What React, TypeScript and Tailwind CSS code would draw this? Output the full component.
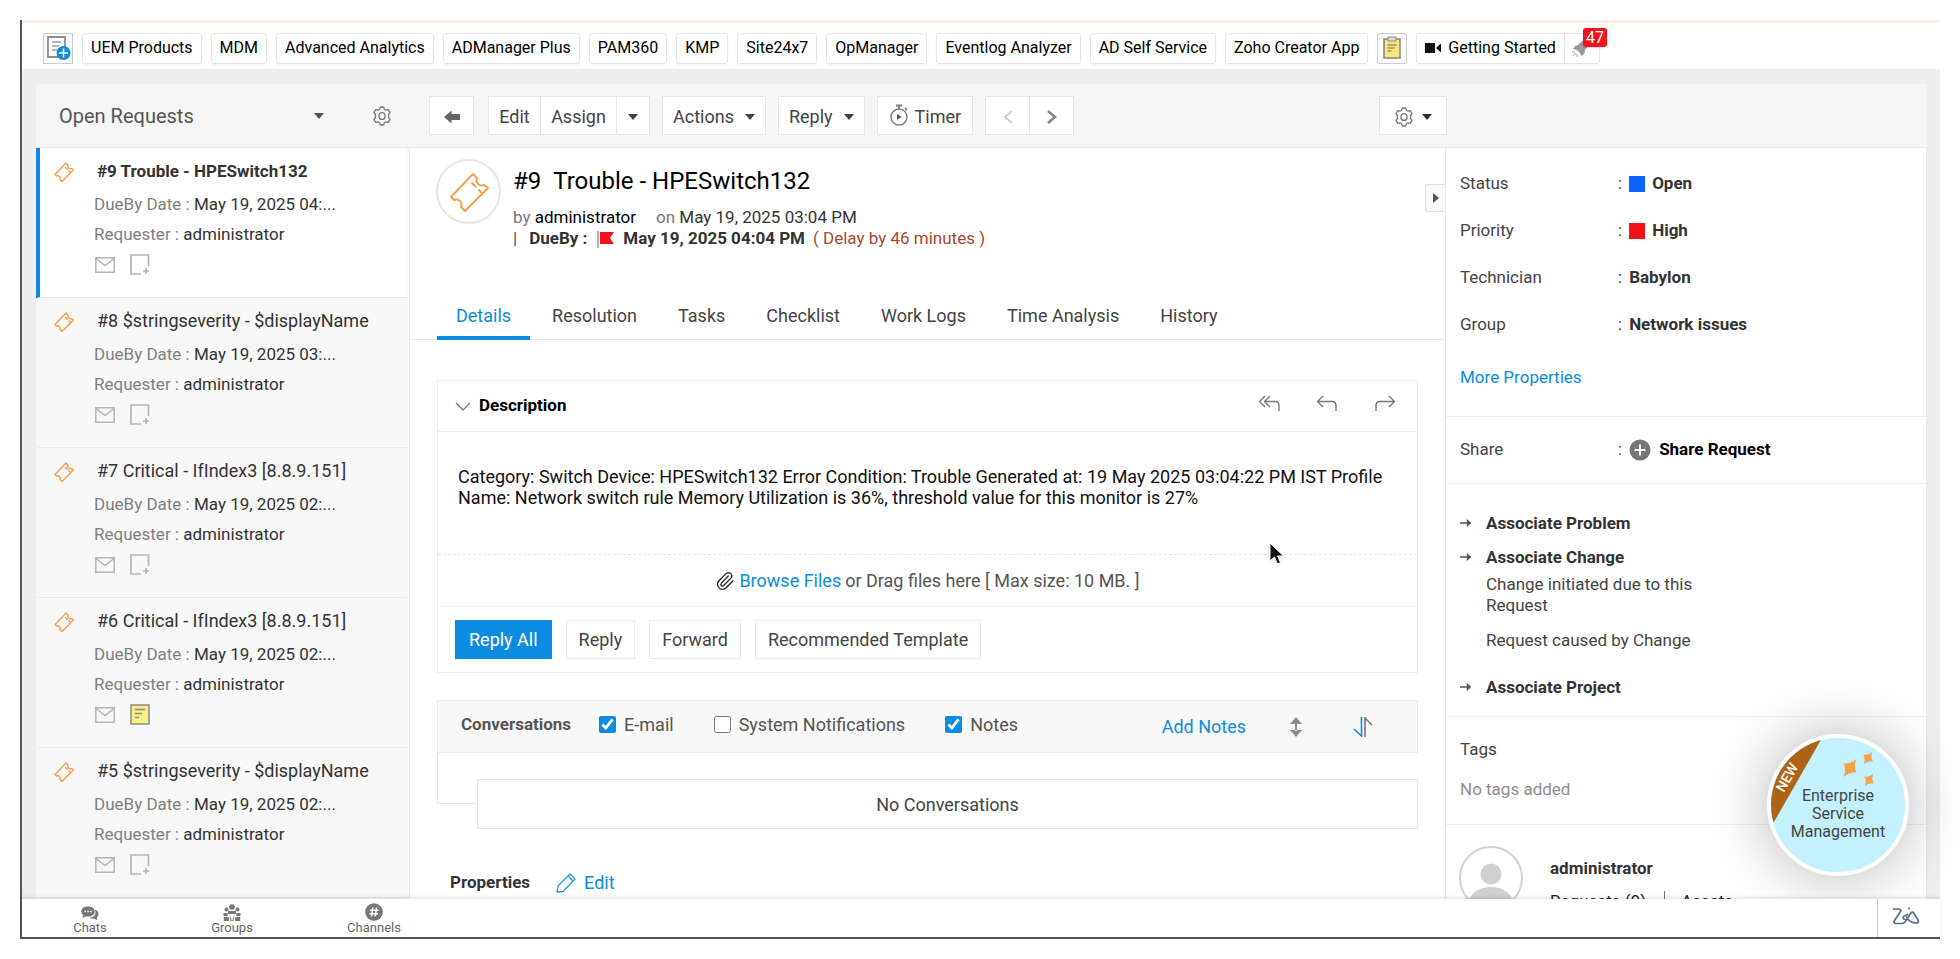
import { useState } from 'react';
import { Paperclip } from 'lucide-react';

const quickLinks = [
  'UEM Products',
  'MDM',
  'Advanced Analytics',
  'ADManager Plus',
  'PAM360',
  'KMP',
  'Site24x7',
  'OpManager',
  'Eventlog Analyzer',
  'AD Self Service',
  'Zoho Creator App',
];

const requests = [
  { id: 9, title: '#9 Trouble - HPESwitch132', due: 'May 19, 2025 04:...', hasNote: false },
  { id: 8, title: '#8 $stringseverity - $displayName', due: 'May 19, 2025 03:...', hasNote: false },
  { id: 7, title: '#7 Critical - IfIndex3 [8.8.9.151]', due: 'May 19, 2025 02:...', hasNote: false },
  { id: 6, title: '#6 Critical - IfIndex3 [8.8.9.151]', due: 'May 19, 2025 02:...', hasNote: true },
  { id: 5, title: '#5 $stringseverity - $displayName', due: 'May 19, 2025 02:...', hasNote: false },
];

const tabs = ['Details', 'Resolution', 'Tasks', 'Checklist', 'Work Logs', 'Time Analysis', 'History'];

const properties = [
  { label: 'Status', value: 'Open', swatch: 'bg-[#0b63fb]' },
  { label: 'Priority', value: 'High', swatch: 'bg-[#f50f1b]' },
  { label: 'Technician', value: 'Babylon', swatch: '' },
  { label: 'Group', value: 'Network issues', swatch: '' },
];

type IconProps = { className?: string };

const Caret = ({ className = '' }: IconProps) => (
  <svg viewBox="0 0 10 6" className={`w-[10px] h-[6px] ${className}`} fill="currentColor">
    <path d="M0 0h10L5 6z" />
  </svg>
);

const Gear = ({ className = '' }: IconProps) => (
  <svg viewBox="0 0 20 20" className={`size-5 ${className}`} fill="none" stroke="currentColor" strokeWidth="1.3" strokeLinejoin="round">
    <path d="M8.3 1h3.4l.6 2.2 1.7 1 2.2-.6 1.9 3-1.5 1.7v3.4l1.5 1.7-1.9 3-2.2-.6-1.7 1-.6 2.2H8.3l-.6-2.2-1.7-1-2.2.6-1.9-3 1.5-1.7V8.3L1.9 6.6l1.9-3 2.2.6 1.7-1z" />
    <rect x="7" y="6.6" width="6" height="6.8" rx="3" />
  </svg>
);

const Ticket = ({ className = '' }: IconProps) => (
  <svg viewBox="0 0 40 40" className={className} fill="none" stroke="#f7a04b" strokeLinejoin="round" strokeLinecap="round">
    <path d="M24 2l4 4c-2 5 3 9 7 7l4 3-23 23-4-4c2-5-3-9-7-7l-3-3z" />
    <path d="M23 11l3.500 3.500M30 18l2 2" />
  </svg>
);

const Mail = () => (
  <svg viewBox="0 0 20 16" className="w-5 h-4" fill="none" stroke="#b5b5b5" strokeWidth="1.500">
    <path d="M.8.8h18.400v14.400H.8zM1 1.500l9 7 9-7" />
  </svg>
);

const AddNote = () => (
  <svg viewBox="0 0 20 21" className="w-5 h-[21px]" fill="none" stroke="#b5b5b5" strokeWidth="1.700">
    <path d="M18.500 12V1H1v19h10M16 14v6M13 17h6" />
  </svg>
);

const Note = () => (
  <svg viewBox="0 0 20 21" className="w-5 h-[21px]" fill="#faee85" stroke="#8a8a8a" strokeWidth="1.500">
    <rect x="1" y="1" width="18" height="19" />
    <path d="M5 5.500h10M5 9.500h7M5 13.500h4" stroke="#8f86a8" />
  </svg>
);

const BackArrow = () => (
  <svg viewBox="0 0 16 14" className="w-4 h-[14px]" fill="#666">
    <path d="M0 7l7.500-6.500V4H16v6H7.500v3.500z" />
  </svg>
);

const Stopwatch = () => (
  <svg viewBox="0 0 20 22" className="w-5 h-[22px] mb-1" fill="none" stroke="#7a7a7a" strokeWidth="1.400">
    <circle cx="10" cy="13" r="8" />
    <path d="M7 1.500h6M10 1.500V5M16 4l2 2" strokeWidth="1.800" />
    <path d="M8 10l4.500 3L8 16z" fill="#555" stroke="none" />
  </svg>
);

const ReplyIcon = ({ all = false }: { all?: boolean }) => (
  <svg viewBox="0 0 22 18" className="w-[22px] h-[18px]" fill="none" stroke="#777" strokeWidth="1.400">
    {all ? (
      <path d="M7 2L1.500 7.500 7 13M12 2L6.500 7.500 12 13M6.500 7.500H17c3 0 4 1 4 4V17" />
    ) : (
      <path d="M7 2L1.500 7.500 7 13M1.500 7.500H16c3 0 4 1 4 4V17" />
    )}
  </svg>
);

const ForwardIcon = () => (
  <svg viewBox="0 0 22 18" className="w-[22px] h-[18px]" fill="none" stroke="#777" strokeWidth="1.400">
    <path d="M15 2l5.500 5.500L15 13M20.500 7.500H6c-3 0-4 1-4 4V17" />
  </svg>
);

const Pencil = () => (
  <svg viewBox="0 0 20 20" className="size-5" fill="none" stroke="#2b97e6" strokeWidth="1.300" strokeLinejoin="round">
    <path d="M14 1l5 5L7 18.500 1 19l1-6zM12 3l5 5" />
  </svg>
);

const RightArrow = () => (
  <svg viewBox="0 0 12 10" className="w-3 h-[10px]" fill="#555" stroke="#555" strokeWidth="1.500">
    <path d="M0 5h9" />
    <path d="M7 1.500L11 5 7 8.500z" strokeWidth=".5" />
  </svg>
);

const AddRequestIcon = () => (
  <svg viewBox="0 0 26 26" className="size-[26px] shrink-0" fill="none">
    <path d="M3 2h17v20H3z" fill="#fff" stroke="#8e8e8e" strokeWidth="1.800" />
    <path d="M7 7h9M7 11h7M7 15h5" stroke="#9a9a9a" strokeWidth="1.500" />
    <circle cx="18.500" cy="18" r="7" fill="#0c8ce0" />
    <path d="M18.500 13.500v9M14 18h9" stroke="#fff" strokeWidth="1.600" />
  </svg>
);

const Clipboard = () => (
  <svg viewBox="0 0 20 24" className="w-5 h-6">
    <rect x="2" y="3" width="16" height="19" fill="#f9e77c" stroke="#8b8b8b" strokeWidth="1.600" />
    <path d="M6 1h8v4H6z" fill="#ddd" stroke="#8b8b8b" />
    <path d="M5.500 9h9M5.500 12h7M5.500 15h4" stroke="#a58e6a" strokeWidth="1.300" />
  </svg>
);

const Camera = () => (
  <svg viewBox="0 0 17 12" className="w-[17px] h-3" fill="#111">
    <path d="M0 1h10v10H0zM11 6l5-4.500v9z" />
  </svg>
);

const Rocket = () => (
  <svg viewBox="0 0 20 20" className="size-5" fill="#9b9b9b">
    <path d="M18 1c-4 0-8 2-11 6l-3 1-2 3 4 1 3 3 1 3 3-2 1-4c3-3 5-7 4-11z" />
    <path d="M1 14l3 0M2 18l3-3M6 19v-3" stroke="#c5c5c5" strokeWidth="1.500" />
  </svg>
);

const ChatsIcon = () => (
  <svg viewBox="0 0 18 15" className="w-[18px] h-[15px]" fill="#777">
    <path d="M13.500 3.500c3 .6 4 2.500 4 4.500 0 1.600-.7 2.800-1.800 3.700l.8 2.800-3.300-1.700c-2 .2-3.500-.3-4.700-1.200 3.500-.2 6-2.200 6-5.200 0-1-.3-2-1-2.900z" />
    <path d="M7 .5c4 0 6.700 2.100 6.700 5S11 10.600 7 10.600c-.8 0-1.500 0-2.200-.3L1.500 12l.7-2.900C1 8.200.3 7 .3 5.500c0-2.900 2.700-5 6.700-5z" />
    <path d="M3.500 4.800h1.500v1.500H3.500zM6.300 4.800h1.500v1.500H6.300zM9.100 4.800h1.500v1.500H9.100z" fill="#fff" />
  </svg>
);

const GroupsIcon = () => (
  <svg viewBox="0 0 18 17" className="w-[18px] h-[17px]" fill="#777">
    <circle cx="9" cy="3" r="2.800" />
    <circle cx="3.500" cy="5.500" r="2" />
    <circle cx="14.500" cy="5.500" r="2" />
    <path d="M5 7h8v3H5zM.5 9h4l.5 3H.5zM13.500 9h4v3h-4.500zM.8 13h5v4h-5zM12.200 13h5v4h-5zM6.500 11l2.500 6 2.500-6-1 6h-3z" />
  </svg>
);

const ChannelsIcon = () => (
  <svg viewBox="0 0 18 18" className="size-[18px]">
    <circle cx="9" cy="9" r="8.800" fill="#777" />
    <path d="M7.800 4.500L6.500 13.500M11.500 4.500L10.200 13.500M5 7.300h8.500M4.500 10.700H13" stroke="#fff" strokeWidth="1.500" />
  </svg>
);

const ZiaLogo = () => (
  <svg viewBox="0 0 28 20" className="w-7 h-5" fill="none" stroke="#56708c" strokeWidth="1.700" strokeLinecap="round" strokeLinejoin="round">
    <path d="M1.500 3h5.500c2 0 2.300 1.500 1.200 3L2.500 14.500c-1 1.500-.5 3 1.500 3h6c1.500 0 2.500-.8 3.500-2.200l5.500-8.300c.9-1.300 2-1.300 2.800 0l4.200 7c.9 1.700.3 3-1.200 3-4 .1-8-1.800-10.300-6M15.500 8.500l-3.300 1.600c-1.700 1-1.200 3 .8 3.400" />
    <circle cx="17" cy="2.500" r="1.100" fill="#56708c" stroke="none" />
  </svg>
);

const toolButton = 'flex items-center justify-center h-[39px] pt-0.5 bg-white border border-[#e6e6e6] text-[#444]';
const cardButton = 'h-[39px] px-3 border border-[#ebebeb] bg-white text-[#444]';

const QuickBar = () => (
  <nav className="flex items-center gap-[9px] h-[46px] pt-1 pl-[21px] bg-white text-[16px] text-black">
    <button aria-label="New request" className="flex items-center justify-center w-[30px] h-[31px] bg-[#fafafa] border border-[#ccc]">
      <AddRequestIcon />
    </button>
    {quickLinks.map((link) => (
      <a key={link} href="#" className="flex items-center h-[31px] px-2 border border-[#e4e4e4] rounded-[3px] shadow-xs whitespace-nowrap">
        {link}
      </a>
    ))}
    <button aria-label="Notes" className="flex items-center justify-center w-[30px] h-[31px] bg-[#fafafa] border border-[#ccc] rounded-[2px]">
      <Clipboard />
    </button>
    <div className="relative flex items-center h-[31px] border border-[#e4e4e4] rounded-[3px] shadow-xs">
      <a href="#" className="flex items-center gap-1.5 h-full px-2 border-r border-[#e4e4e4] whitespace-nowrap">
        <Camera />
        Getting Started
      </a>
      <button aria-label="What's new" className="flex items-center justify-start w-[34px] h-full pl-1.5">
        <Rocket />
      </button>
      <span className="absolute -top-1.5 -right-2 px-[3px] h-[19px] leading-[19px] rounded-[3px] bg-[#f50f1b] text-white shadow">47</span>
    </div>
  </nav>
);

const Toolbar = () => (
  <div className="flex items-center shrink-0 h-[64px] border-b border-[#e8e8e8] text-[18px]">
    <div className="flex items-center w-[374px] shrink-0 pl-[23px] pr-[18px]">
      <div className="relative flex items-center flex-1 mr-[48px]">
        <select aria-label="Request view" className="w-full appearance-none bg-transparent text-[20px] text-[#555] outline-none">
          <option>Open Requests</option>
        </select>
        <Caret className="absolute right-0 text-[#555]" />
      </div>
      <button aria-label="List settings" className="text-[#777]">
        <Gear />
      </button>
    </div>
    <div className="flex items-center gap-3 pl-[19px]">
      <button aria-label="Back" className={`${toolButton} w-[45px]`}>
        <BackArrow />
      </button>
      <div className="flex ml-[2px]">
        <button className={`${toolButton} w-[53px]`}>Edit</button>
        <button className={`${toolButton} w-[77px] -ml-px`}>Assign</button>
        <button aria-label="Assign options" className={`${toolButton} w-[34px] -ml-px`}>
          <Caret />
        </button>
      </div>
      <button className={`${toolButton} gap-[11px] px-[10px]`}>
        Actions <Caret />
      </button>
      <button className={`${toolButton} gap-[11px] px-[10px]`}>
        Reply <Caret />
      </button>
      <button className={`${toolButton} gap-1.5 px-[11px]`}>
        <Stopwatch /> Timer
      </button>
      <div className="flex">
        <button aria-label="Previous request" className={`${toolButton} w-[45px]`}>
          <svg viewBox="0 0 10 14" className="w-[10px] h-[14px]" fill="none" stroke="#ccc" strokeWidth="1.800">
            <path d="M9 1L2 7l7 6" />
          </svg>
        </button>
        <button aria-label="Next request" className={`${toolButton} w-[45px] -ml-px`}>
          <svg viewBox="0 0 10 14" className="w-[10px] h-[14px]" fill="none" stroke="#888" strokeWidth="2.600">
            <path d="M1 1l7 6-7 6" />
          </svg>
        </button>
      </div>
    </div>
    <button aria-label="Page settings" className={`${toolButton} gap-2 w-[68px] ml-auto mr-[480px] text-[#777]`}>
      <Gear />
      <Caret className="text-[#333]" />
    </button>
  </div>
);

const RequestList = () => (
  <aside className="w-[374px] shrink-0 bg-[#f8f8f8] border-r border-[#e8e8e8] overflow-hidden">
    {requests.map((request, index) => (
      <article
        key={request.id}
        className={`flex h-[150px] pt-[13px] mr-0.5 border-b border-[#e8e8e8] border-l-4 ${
          index === 0 ? 'bg-white border-l-[#0c8ce0]' : 'border-l-[#f8f8f8]'
        }`}
      >
        <Ticket className="size-5 mt-px ml-[14px] shrink-0 [stroke-width:3]" />
        <div className="pl-5 text-[#333]">
          <h2 className={`pl-[3px] leading-5 whitespace-nowrap ${index === 0 ? 'font-bold' : 'text-[18px]'}`}>{request.title}</h2>
          <p className="mt-3 leading-[22px]">
            <span className="text-[#808080]">DueBy Date : </span>
            {request.due}
          </p>
          <p className="mt-2 leading-[22px]">
            <span className="text-[#808080]">Requester : </span>
            administrator
          </p>
          <div className="flex items-center gap-[15px] mt-[9px] pl-px">
            <Mail />
            {request.hasNote ? <Note /> : <AddNote />}
          </div>
        </div>
      </article>
    ))}
  </aside>
);

const RequestHeader = () => (
  <header className="flex h-[142px] pt-[11px] pl-[26px] shrink-0">
    <div className="flex items-center justify-center size-[65px] shrink-0 rounded-full border-2 border-[#e6e6e6]">
      <Ticket className="size-10 [stroke-width:2]" />
    </div>
    <div className="pl-3 pt-2">
      <h1 className="text-[24px] leading-7 text-black">
        <span className="mr-3">#9</span>
        Trouble - HPESwitch132
      </h1>
      <p className="mt-3 leading-[21px] text-[#333]">
        <span className="text-[#777]">by </span>
        <span className="mr-5 text-black">administrator</span>
        <span className="text-[#777]">on </span> May 19, 2025 03:04 PM
      </p>
      <p className="flex items-center leading-[21px]">
        <span className="mr-3 text-[#555]">|</span>
        <span className="mr-2.5 font-bold text-[#333]">DueBy :</span>
        <svg viewBox="0 0 18 18" className="w-[18px] h-[18px] mr-2">
          <path d="M1 1v17" stroke="#999" strokeWidth="1.500" />
          <path d="M3 2h14l-4 6 4 6H3z" fill="#f50f1b" />
        </svg>
        <span className="mr-2 font-bold text-[#333]">May 19, 2025 04:04 PM</span>
        <span className="text-[#a5482f]">( Delay by 46 minutes )</span>
      </p>
    </div>
  </header>
);

const Description = () => (
  <section className="border border-[#ededed] text-[18px]">
    <div className="flex items-center h-[51px] border-b border-[#ededed] px-[17px]">
      <svg viewBox="0 0 16 9" className="w-4 h-[9px] mr-2" fill="none" stroke="#777" strokeWidth="1.300">
        <path d="M1 1l7 7 7-7" />
      </svg>
      <h3 className="text-[17px] font-bold text-black">Description</h3>
      <div className="flex gap-9 ml-auto pr-1 pb-1.5">
        <button aria-label="Reply to all"><ReplyIcon all /></button>
        <button aria-label="Reply to sender"><ReplyIcon /></button>
        <button aria-label="Forward request"><ForwardIcon /></button>
      </div>
    </div>
    <p className="h-[122px] pt-[34px] px-5 leading-[21px] text-[#111]">
      Category: Switch Device: HPESwitch132 Error Condition: Trouble Generated at: 19 May 2025 03:04:22 PM IST Profile Name:
      Network switch rule Memory Utilization is 36%, threshold value for this monitor is 27%
    </p>
    <div className="flex items-center justify-center h-[52px] border-t border-dashed border-[#e4e4e4] text-[#555]">
      <Paperclip size={20} strokeWidth={1.6} className="mr-1 text-[#222]" />
      <a href="#" className="mr-1 text-[#0c8ce0]">Browse Files</a>
      or Drag files here [ Max size: 10 MB. ]
    </div>
    <div className="flex gap-[14px] px-[17px] py-[13px] border-t border-[#f4f4f4]">
      <button className="h-[39px] px-[14px] bg-[#0c8ce0] text-white">Reply All</button>
      <button className={cardButton}>Reply</button>
      <button className={cardButton}>Forward</button>
      <button className={cardButton}>Recommended Template</button>
    </div>
  </section>
);

const Conversations = () => {
  const [filters, setFilters] = useState({ email: true, system: false, notes: true });

  const toggle = (name: 'email' | 'system' | 'notes') => {
    setFilters((prev) => ({ ...prev, [name]: !prev[name] }));
  };

  return (
    <section className="mt-[27px] text-[18px]">
      <div className="flex items-center h-[53px] px-[23px] bg-[#f8f8f8] border border-[#ebebeb] text-[#555]">
        <div className="flex items-center gap-10 pb-1">
          <h3 className="text-[17px] font-bold -mr-3">Conversations</h3>
          <label className="flex items-center gap-2">
            <input type="checkbox" checked={filters.email} onChange={() => toggle('email')} className="size-[17px] accent-[#0c8ce0]" />
            E-mail
          </label>
          <label className="flex items-center gap-2">
            <input type="checkbox" checked={filters.system} onChange={() => toggle('system')} className="size-[17px] accent-[#0c8ce0]" />
            System Notifications
          </label>
          <label className="flex items-center gap-2">
            <input type="checkbox" checked={filters.notes} onChange={() => toggle('notes')} className="size-[17px] accent-[#0c8ce0]" />
            Notes
          </label>
        </div>
        <a href="#" className="ml-auto mr-11 text-[#0c8ce0]">Add Notes</a>
        <button aria-label="Expand conversations" className="mr-[51px]">
          <svg viewBox="0 0 12 20" className="w-3 h-5" fill="#8c8c8c">
            <path d="M6 0l6 7H0zM6 20l6-7H0zM5 6h2v8H5z" />
          </svg>
        </button>
        <button aria-label="Sort conversations" className="mr-[21px]">
          <svg viewBox="0 0 20 20" className="size-5" fill="none" strokeWidth="1.600">
            <path d="M8.500 0v19L1 12" stroke="#0c8ce0" />
            <path d="M12 20V1l7 7" stroke="#777" />
          </svg>
        </button>
      </div>
      <div className="flex">
        <div className="w-10 h-[51px] shrink-0 border-l border-b border-[#e6e6e6]" />
        <p className="flex items-center justify-center flex-1 h-[50px] mt-[26px] border border-[#e6e6e6] text-[#444]">
          No Conversations
        </p>
      </div>
    </section>
  );
};

const RequestDetails = () => (
  <main className="relative flex flex-col flex-1 min-w-0 bg-white overflow-hidden">
    <RequestHeader />
    <div role="tablist" className="flex shrink-0 gap-[3px] h-[50px] pl-[27px] border-b border-[#e8e8e8] text-[18px]">
      {tabs.map((tab, index) => (
        <button
          key={tab}
          role="tab"
          aria-selected={index === 0}
          className={`h-[50px] pt-1 px-[19px] border-b-4 ${index === 0 ? 'border-[#0c8ce0] text-[#0c8ce0]' : 'border-transparent text-[#444]'}`}
        >
          {tab}
        </button>
      ))}
    </div>
    <div className="pt-10 pl-[27px] pr-[27px]">
      <Description />
      <Conversations />
      <div className="flex items-center mt-10 pl-[13px]">
        <h3 className="mr-[26px] font-bold text-[#333]">Properties</h3>
        <a href="#" className="flex items-center gap-2 text-[18px] text-[#0c8ce0]">
          <Pencil />
          Edit
        </a>
      </div>
    </div>
    <button aria-label="Collapse properties" className="absolute top-9 right-0 flex items-center justify-center w-5 h-7 bg-[#fafafa] border border-r-0 border-[#dedede] rounded-l-[3px]">
      <svg viewBox="0 0 6 10" className="w-[6px] h-[10px]" fill="#555">
        <path d="M0 0l6 5-6 5z" />
      </svg>
    </button>
    <svg viewBox="0 0 16 24" className="absolute top-[394px] right-[160px] w-4 h-6 drop-shadow">
      <path d="M1 1v18l4.500-4 3 7 3-1.400-3-6.600H14.500z" fill="#111" stroke="#fff" />
    </svg>
  </main>
);

const PropertyPanel = () => (
  <aside className="w-[482px] shrink-0 bg-white border-l border-r border-[#e8e8e8] text-[#444] overflow-hidden">
    <dl className="pt-3 pl-[14px]">
      {properties.map((property) => (
        <div key={property.label} className="flex items-center h-[47px]">
          <dt className="w-[158px]">{property.label}</dt>
          <dd className="flex items-center gap-[7px] font-bold text-[#333]">
            <span className="font-normal">:</span>
            {property.swatch && <span className={`size-4 ${property.swatch}`} />}
            <span>{property.value}</span>
          </dd>
        </div>
      ))}
    </dl>
    <a href="#" className="block h-[68px] pt-[19px] pl-[14px] leading-5 text-[#0c8ce0]">More Properties</a>
    <div className="flex items-center h-[68px] pl-[14px] border-y border-[#ededed]">
      <span className="w-[158px]">Share</span>
      :
      <button className="flex items-center gap-2 ml-[7px] font-bold text-black">
        <svg viewBox="0 0 22 22" className="size-[22px]">
          <circle cx="11" cy="11" r="10.500" fill="#767676" />
          <path d="M11 5.500v11M5.500 11h11" stroke="#fff" strokeWidth="2" />
        </svg>
        Share Request
      </button>
    </div>
    <div className="h-[233px] pt-[29px] pl-[14px] border-b border-[#ededed] leading-5">
      <div className="flex items-center gap-[14px]">
        <RightArrow />
        <a href="#" className="font-bold text-[#333]">Associate Problem</a>
      </div>
      <div className="flex items-center gap-[14px] mt-[14px]">
        <RightArrow />
        <a href="#" className="font-bold text-[#333]">Associate Change</a>
      </div>
      <p className="w-[240px] mt-[7px] ml-[26px] leading-[21px]">Change initiated due to this Request</p>
      <p className="mt-[14px] ml-[26px]">Request caused by Change</p>
      <div className="flex items-center gap-[14px] mt-[27px]">
        <RightArrow />
        <a href="#" className="font-bold text-[#333]">Associate Project</a>
      </div>
    </div>
    <div className="h-[108px] pt-[22px] pl-[14px] border-b border-[#ededed] leading-5">
      <h3>Tags</h3>
      <p className="mt-5 text-[#8e8e8e]">No tags added</p>
    </div>
    <div className="flex pt-[21px] pl-[13px]">
      <svg viewBox="0 0 64 64" className="size-16 shrink-0">
        <circle cx="32" cy="32" r="31" fill="#fff" stroke="#d2d2d2" strokeWidth="2" />
        <circle cx="32" cy="28" r="10.500" fill="#d0d0d0" />
        <path d="M10 54c3-8 12-13 22-13s19 5 22 13c-5 6-13 9-22 9s-17-3-22-9z" fill="#d0d0d0" />
      </svg>
      <div className="pl-[27px] pt-3 leading-5">
        <p className="font-bold text-[#333]">administrator</p>
        <p className="flex mt-[13px] text-[#222]">
          <a href="#" className="pr-[18px] border-r border-[#777]">Requests (9)</a>
          <a href="#" className="pl-4">Assets</a>
        </p>
      </div>
    </div>
  </aside>
);

const EsmBadge = () => (
  <button className="absolute right-[31px] bottom-[61px] size-[142px] rounded-full border-4 border-white bg-[#c3f2fe] overflow-hidden text-[16px] leading-[18px] text-[#444] shadow-[0_0_60px_rgba(0,0,0,0.3)]">
    <svg viewBox="0 0 134 134" className="absolute inset-0">
      <path d="M0 0h51L3 84H0z" fill="#ad6418" />
      <g fill="#f7a04b">
        <path d="M0-11Q2-3 8 0Q2 3 0 11Q-2 3-8 0Q-2-3 0-11z" transform="translate(79 30) rotate(35)" />
        <path d="M0-8Q1-2 6 0Q1 2 0 8Q-1 2-6 0Q-1-2 0-8z" transform="translate(97 20) rotate(35)" />
        <path d="M0-8Q1-2 6 0Q1 2 0 8Q-1 2-6 0Q-1-2 0-8z" transform="translate(98 42) rotate(35)" />
      </g>
      <text x="17" y="40" transform="rotate(-60 17 40)" textAnchor="middle" dominantBaseline="middle" fontSize="14" fontWeight="500" fill="#fff">
        NEW
      </text>
    </svg>
    <span className="relative block pt-[18px]">
      Enterprise
      <br />
      Service
      <br />
      Management
    </span>
  </button>
);

const Footer = () => (
  <footer className="relative flex shrink-0 h-[38px] bg-white text-[13px] leading-[14px] text-[#666] shadow-[0_-2px_3px_rgba(0,0,0,0.1)]">
    <button className="flex flex-col items-center justify-end w-[142px] pr-1.5 pb-0.5">
      <ChatsIcon />
      Chats
    </button>
    <button className="flex flex-col items-center justify-end w-[142px] pr-1.5 pb-0.5">
      <GroupsIcon />
      Groups
    </button>
    <button className="flex flex-col items-center justify-end w-[142px] pr-1.5 pb-0.5">
      <ChannelsIcon />
      Channels
    </button>
    <button aria-label="Ask Zia" className="flex items-center justify-center w-[63px] pr-1.5 pb-1 ml-auto border-l border-[#ccc]">
      <ZiaLogo />
    </button>
  </footer>
);

const App = () => (
  <div className="h-screen p-5 bg-white font-['Roboto',sans-serif] text-[17px]">
    <div className="relative flex flex-col h-full border-l-2 border-b-2 border-[#555]">
      <div className="shrink-0 h-[3px] bg-[#fdf0e7]" />
      <QuickBar />
      <div className="flex flex-col flex-1 min-h-0 pt-[15px] pl-[14px] pr-[13px] bg-[#efefef]">
        <div className="flex flex-col flex-1 min-h-0 bg-[#f6f6f6]">
          <Toolbar />
          <div className="flex flex-1 min-h-0">
            <RequestList />
            <RequestDetails />
            <PropertyPanel />
          </div>
        </div>
      </div>
      <EsmBadge />
      <Footer />
    </div>
  </div>
);

export default App;
